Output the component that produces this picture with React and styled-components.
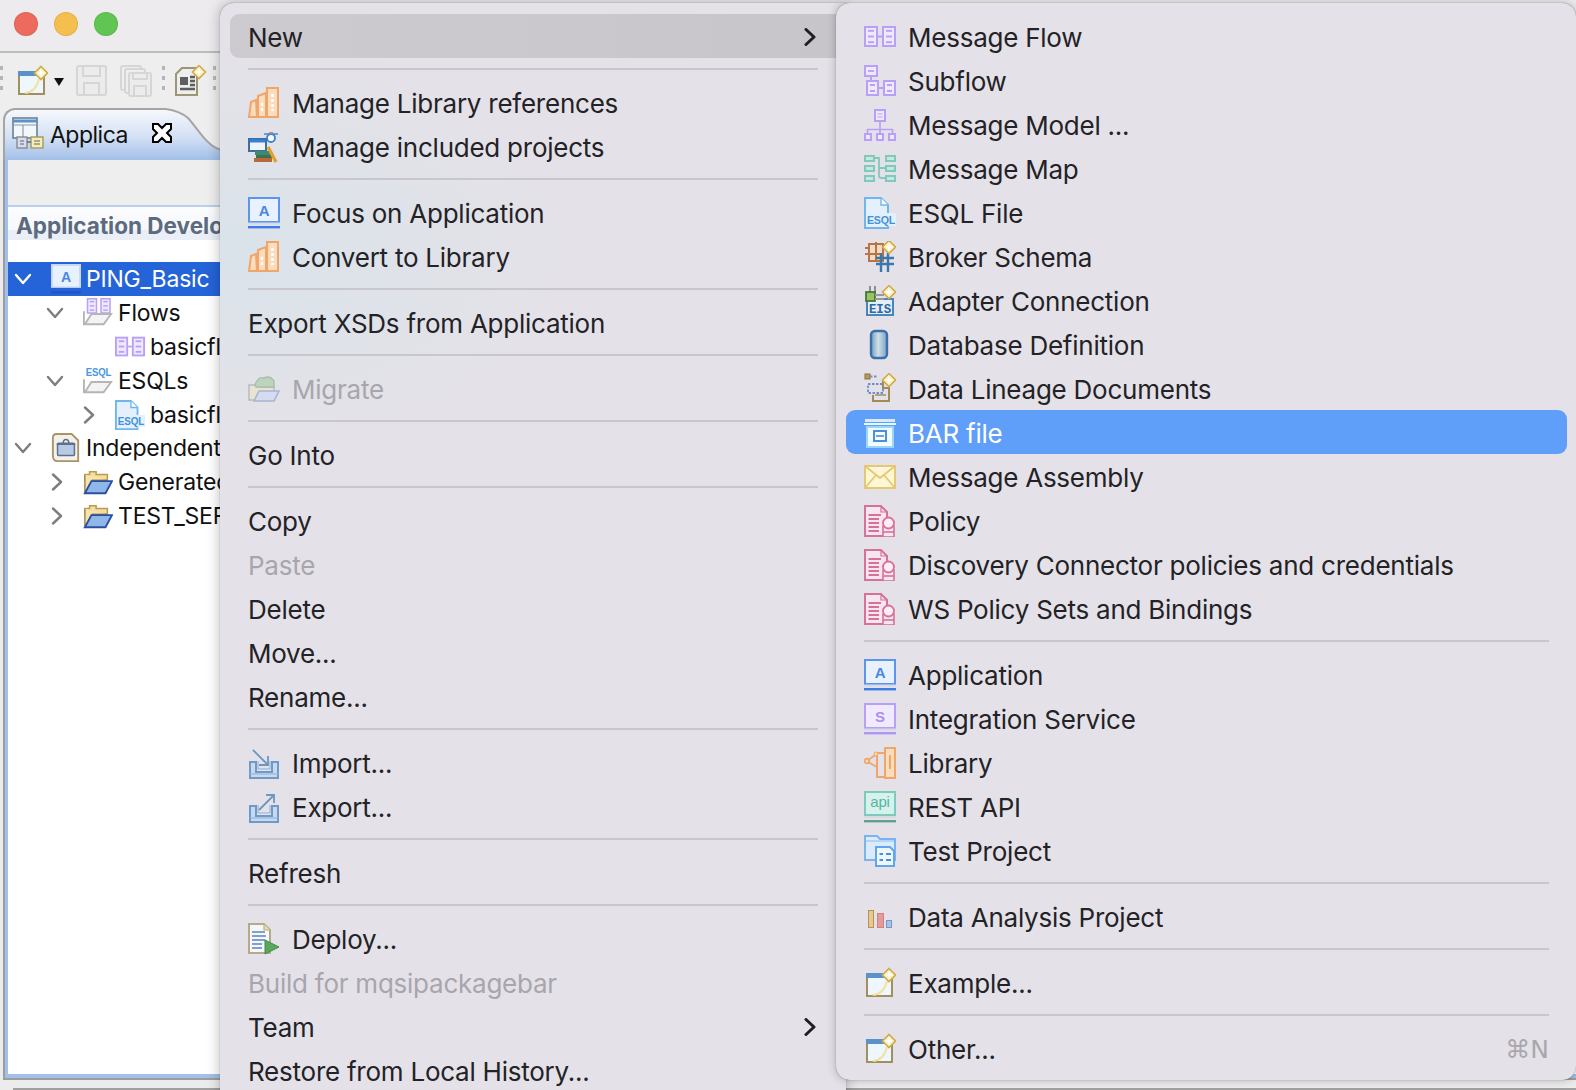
import React from 'react'
import styled, { createGlobalStyle } from 'styled-components'

const GlobalStyle = createGlobalStyle`
  html, body {
    margin: 0;
    padding: 0;
    background: #ececec;
  }
  body {
    font-family: Inter, 'Noto Sans', 'Liberation Sans', sans-serif;
    overflow: hidden;
  }
`

const Screen = styled.div`
  position: relative;
  width: 1576px;
  height: 1090px;
  overflow: hidden;
  background: #ececec;
`

const Window = styled.div`
  display: flex;
  flex-direction: column;
  height: 100%;
`

const TitleBar = styled.div`
  display: flex;
  align-items: center;
  gap: 16px;
  box-sizing: border-box;
  height: 53px;
  padding: 0 0 3px 14px;
  background: #edebee;
  border-bottom: 2px solid #bdbcbd;
`

const Light = styled.span`
  width: 24px;
  height: 24px;
  border-radius: 50%;
  background: ${p => p.$color};
  box-shadow: inset 0 0 0 1px rgba(0, 0, 0, 0.08);
`

const Toolbar = styled.div`
  display: flex;
  align-items: center;
  height: 55px;
  background: #eeeeee;
`

const Grip = styled.span`
  width: 3px;
  height: 30px;
  margin: 0 ${p => p.$right || 0}px 0 ${p => p.$left || 0}px;
  background: repeating-linear-gradient(to bottom, #b5b5b5 0 4px, transparent 4px 10px);
`

const ToolIcon = styled.span`
  display: flex;
  margin-right: ${p => p.$gap || 0}px;
`

const Caret = styled.span`
  width: 0;
  height: 0;
  margin: 3px 12px 0 0;
  border-left: 5px solid transparent;
  border-right: 5px solid transparent;
  border-top: 8px solid #111;
`

const TabStrip = styled.div`
  display: flex;
  height: 52px;
  padding-left: 3px;
  background: #eeeeee;
`

const Tab = styled.div`
  display: flex;
  align-items: center;
  flex: none;
  box-sizing: border-box;
  width: 163px;
  padding: 0 0 4px 7px;
  border-top: 2px solid #a5a5a5;
  border-left: 2px solid #a5a5a5;
  border-top-left-radius: 12px;
  background: linear-gradient(to bottom, #f6f8fd 0%, #d3e0f4 55%, #a2bfe8 100%);
  font-size: 23px;
  letter-spacing: -0.5px;
  color: #111;
`

const TabIconBox = styled.span`
  display: flex;
  flex: none;
`

const TabLabel = styled.span`
  flex: none;
  width: 101px;
  margin-left: 6px;
  padding-top: 3px;
`

const TabClose = styled.span`
  position: relative;
  display: flex;
  flex: none;
  margin-right: -14px;
`

const TabCurve = styled.svg`
  display: block;
  flex: none;
`

const Panel = styled.div`
  flex: 1;
  display: flex;
  flex-direction: column;
  min-height: 0;
  margin-left: 3px;
  border-left: 2px solid #9d9d9d;
  border-bottom: 2px solid #9d9d9d;
`

const PanelInner = styled.div`
  flex: 1;
  display: flex;
  flex-direction: column;
  min-height: 0;
  border-left: 3px solid #a3c0ea;
  border-bottom: 4px solid #a3c0ea;
  background: #ffffff;
`

const PanelGap = styled.div`
  height: 45px;
  background: #eeeeee;
`

const SectionTitle = styled.div`
  box-sizing: border-box;
  height: 35px;
  padding: 5px 0 0 8px;
  border-top: 2px solid #b9cfee;
  background: linear-gradient(to bottom, #fbfcfe 0%, #f6f8fc 70%, #e9eef7 70%, #e9eef7 100%);
  font-size: 22.5px;
  font-weight: 700;
  color: #5c6a7e;
  white-space: nowrap;
`

const Tree = styled.div`
  padding-top: 22px;
  background: #ffffff;
`

const TreeRow = styled.div`
  display: flex;
  align-items: center;
  height: 33.9px;
  padding-left: ${p => p.$level * 32 + 6}px;
  background: ${p => (p.$selected ? '#2463d8' : 'transparent')};
  color: ${p => (p.$selected ? '#ffffff' : '#111111')};
  font-size: 23px;
  letter-spacing: -0.2px;
  white-space: nowrap;
`

const TreeToggle = styled.span`
  display: flex;
  justify-content: center;
  width: ${p => (p.$closed ? 22 : 18)}px;
  margin-right: ${p => (p.$closed ? 15 : 19)}px;
`

const TreeIcon = styled.span`
  display: flex;
  margin: 0 5px 0 0;
`

const StatusLine = styled.div`
  flex: none;
  height: 2px;
  margin: 8px 0 0 13px;
  background: #a0a0a0;
`

const MainMenu = styled.div`
  position: absolute;
  left: 220px;
  top: 3px;
  box-sizing: border-box;
  width: 626px;
  height: 1100px;
  padding: 11px 11px 0 10px;
  border-radius: 14px 0 0 0;
  background:
    radial-gradient(ellipse 340px 190px at 10px 250px, #dae3ea 0%, rgba(218, 227, 234, 0) 100%),
    #e4e2e8;
  box-shadow: 0 0 14px rgba(0, 0, 0, 0.28), 0 0 1px rgba(0, 0, 0, 0.5);
`

const SubMenu = styled.div`
  position: absolute;
  left: 836px;
  top: 3px;
  box-sizing: border-box;
  width: 740px;
  height: 1077px;
  padding: 11px 9px 0 10px;
  border-radius: 14px;
  background: #e4e2e8;
  box-shadow: 0 0 10px rgba(0, 0, 0, 0.25), 0 0 1px rgba(0, 0, 0, 0.5);
`

const Row = styled.div`
  display: flex;
  align-items: center;
  box-sizing: border-box;
  height: 44px;
  padding: 2px ${p => (p.$open ? 26 : 16)}px 0 18px;
  border-radius: 9px;
  font-size: 26px;
  letter-spacing: -0.24px;
  white-space: nowrap;
  color: ${p => (p.$active ? '#ffffff' : p.$disabled ? '#a8a6ac' : '#232226')};
  background: ${p => (p.$active ? '#5f9ef9' : p.$open ? 'linear-gradient(to right, #cdcbd0, #c8c5ca)' : 'transparent')};
  margin-right: ${p => (p.$open ? -10 : 0)}px;
`

const SubRow = styled(Row)`
  padding-right: 18px;
`

const RowIcon = styled.span`
  display: flex;
  flex: none;
  width: 32px;
  margin-right: 12px;
`

const RowLabel = styled.span`
  flex: 1;
`

const Shortcut = styled.span`
  font-family: 'DejaVu Sans', sans-serif;
  font-size: 25px;
  letter-spacing: 0;
  color: #a9a7ad;
`

const Separator = styled.div`
  height: 2px;
  margin: 10px ${p => p.$right}px 10px 18px;
  background: #c9c7cc;
`

const Svg = ({ size = 32, children }) => (
  <svg width={size} height={size} viewBox="0 0 32 32" fill="none">{children}</svg>
)

const Chevron = ({ dir = 'right', color = '#222', w = 3, size = 18 }) => (
  <svg width={size} height={size} viewBox="0 0 18 18" fill="none">
    <path
      d={dir === 'right' ? 'M5 1.5 L13 9 L5 16.5' : 'M2 5 L9 13 L16 5'}
      stroke={color}
      strokeWidth={w}
      strokeLinecap="round"
      strokeLinejoin="round"
    />
  </svg>
)

const PURPLE = '#b9a0f6'
const PURPLE_FILL = '#efe9ff'

const FlowBox = ({ x, y, w, h, lines = 3 }) => (
  <g>
    <rect x={x + 1} y={y + 1} width={w - 2} height={h - 2} fill={PURPLE_FILL} stroke={PURPLE} strokeWidth="2" />
    {Array.from({ length: lines }).map((_, i) => (
      <path
        key={i}
        d={`M${x + 4} ${y + 2 + (h - 4) * (i + 0.5) / lines} H${x + w - 4}`}
        stroke={PURPLE}
        strokeWidth="2"
      />
    ))}
  </g>
)

const MessageFlowIcon = ({ size }) => (
  <Svg size={size}>
    <FlowBox x={0} y={5} w={14} h={21} />
    <FlowBox x={18} y={5} w={14} h={21} />
    <path d="M14 15.5 H18" stroke={PURPLE} strokeWidth="2" />
  </Svg>
)

const SubflowIcon = () => (
  <Svg>
    <rect x="1" y="1" width="12" height="10" fill={PURPLE_FILL} stroke={PURPLE} strokeWidth="2" />
    <path d="M4 6 H10" stroke={PURPLE} strokeWidth="1.8" />
    <path d="M7 11 V15" stroke={PURPLE} strokeWidth="2" />
    <FlowBox x={2} y={15} w={13} h={16} lines={2} />
    <FlowBox x={19} y={15} w={13} h={16} lines={2} />
    <path d="M15 23 H19" stroke={PURPLE} strokeWidth="2" />
  </Svg>
)

const ModelIcon = () => (
  <Svg>
    <rect x="11" y="1" width="10" height="11" fill={PURPLE_FILL} stroke={PURPLE} strokeWidth="2" />
    <path d="M13.5 5 H18.5 M13.5 8 H18.5" stroke={PURPLE} strokeWidth="1.2" />
    <path d="M16 12 V25 M3.5 25 V20.5 H28.5 V25" stroke={PURPLE} strokeWidth="1.6" />
    <rect x="1" y="25" width="6" height="6" fill={PURPLE_FILL} stroke={PURPLE} strokeWidth="2" />
    <rect x="13" y="25" width="6" height="6" fill={PURPLE_FILL} stroke={PURPLE} strokeWidth="2" />
    <rect x="25" y="25" width="6" height="6" fill={PURPLE_FILL} stroke={PURPLE} strokeWidth="2" />
  </Svg>
)

const MapIcon = () => {
  const c = '#7fcabc'
  const ys = [3, 13, 23]
  return (
    <Svg>
      {ys.map(y => (
        <g key={y}>
          <rect x="1" y={y} width="9" height="5" fill="#c9e6e0" stroke={c} strokeWidth="2" />
          <rect x="22" y={y} width="9" height="5" fill="#c9e6e0" stroke={c} strokeWidth="2" />
        </g>
      ))}
      <path d="M10 5 H15 V23 Q15 25 18 25 H22 M15 15 H22" stroke={c} strokeWidth="1.8" />
    </Svg>
  )
}

const EsqlIcon = ({ size }) => (
  <Svg size={size}>
    <path d="M1 1 H17 L24 8 V31 H1 Z" fill="#e4f1fd" stroke="#6fb6ec" strokeWidth="2" />
    <path d="M17 1 V8 H24" fill="#ffffff" stroke="#6fb6ec" strokeWidth="1.4" />
    <rect x="3" y="16" width="29" height="13" fill="#e4f1fd" />
    <text x="3" y="27" fontFamily="'Liberation Sans', sans-serif" fontSize="11" fontWeight="700" fill="#3f93d8" textLength="28" lengthAdjust="spacingAndGlyphs">ESQL</text>
  </Svg>
)

const Star = ({ x = 25, y = 7 }) => (
  <g>
    <path d={`M${x} ${y - 6.5} L${x + 6.5} ${y} L${x} ${y + 6.5} L${x - 6.5} ${y} Z`} fill="#fbf2c4" stroke="#d0ab4e" strokeWidth="1.6" />
    <path d={`M${x} ${y - 3} V${y + 3} M${x - 3} ${y} H${x + 3}`} stroke="#fff" strokeWidth="1.6" />
  </g>
)

const BrokerIcon = () => (
  <Svg>
    <path d="M5 3 H19 V20 H5 Z" fill="#f2dcc2" stroke="#b6744a" strokeWidth="2" />
    <path d="M1 13 H20 M12 1 V21 M1 7 H5" stroke="#b6744a" strokeWidth="2" />
    <path d="M12 23 H30 M12 17 H30 M17 12 V31 M24 12 V31" stroke="#3a78ab" strokeWidth="2.4" />
    <Star x={25} y={6} />
  </Svg>
)

const AdapterIcon = () => (
  <Svg>
    <path d="M3 14 H29 V30 H3 Z" fill="#e3eefa" stroke="#4a84b8" strokeWidth="2" />
    <text x="5" y="28" fontFamily="'Liberation Mono', monospace" fontSize="12.5" fontWeight="700" fill="#30689e" textLength="22">EIS</text>
    <path d="M6 1 V8 M11 1 V8" stroke="#8f8f8f" strokeWidth="2" />
    <rect x="2" y="7" width="9" height="9" fill="#9bc25d" stroke="#3f7a3e" strokeWidth="1.8" />
    <path d="M11 10 H20 M11 14 H20" stroke="#9a9a9a" strokeWidth="2" />
    <Star x={25} y={7} />
  </Svg>
)

const DatabaseIcon = () => (
  <Svg>
    <defs>
      <linearGradient id="dbFill" x1="0" x2="1" y1="0" y2="0">
        <stop offset="0" stopColor="#6f9cc0" />
        <stop offset="0.45" stopColor="#cfe0e8" />
        <stop offset="1" stopColor="#7aa3c4" />
      </linearGradient>
    </defs>
    <rect x="7" y="2" width="16" height="27" rx="4" fill="url(#dbFill)" stroke="#3c6ea8" strokeWidth="2.4" />
  </Svg>
)

const LineageIcon = () => (
  <Svg>
    <rect x="1" y="1" width="5" height="5" fill="#b69a5e" stroke="#8a7038" strokeWidth="1" />
    <path d="M6 3.5 H14 M4 11 H19 V20 H4 Z" stroke="#6e90c8" strokeWidth="1.8" strokeDasharray="2.5 1.5" />
    <path d="M19 8 V15 H25 V28 H9 V22" stroke="#a08c5a" strokeWidth="2" />
    <path d="M11 22 H22" stroke="#a08c5a" strokeWidth="1.4" />
    <Star x={25} y={7} />
  </Svg>
)

const BarIcon = () => (
  <Svg>
    <path d="M1 2 H31 V5 H1 Z" fill="#d4ecfb" />
    <path d="M0 6 H32 V8 H0 Z" fill="#eaf6fe" />
    <rect x="3" y="10" width="26" height="20" fill="#f4fbff" stroke="#9bd7f5" strokeWidth="2" />
    <rect x="10" y="14" width="12" height="10" fill="none" stroke="#4b8fd8" strokeWidth="2" />
    <path d="M12 19 H20" stroke="#4b8fd8" strokeWidth="1.6" />
  </Svg>
)

const EnvelopeIcon = () => (
  <Svg>
    <rect x="1" y="5" width="30" height="22" fill="#fdf7d6" stroke="#e4c873" strokeWidth="2" />
    <path d="M1 5 L16 17 L31 5 M1 27 L12 14 M31 27 L20 14" stroke="#e4c873" strokeWidth="1.8" />
  </Svg>
)

const PolicyIcon = () => {
  const c = '#d8709c'
  return (
    <Svg>
      <path d="M1 1 H17 L23 7 V31 H1 Z" fill="#f6e6ee" stroke={c} strokeWidth="2" />
      <path d="M17 1 V7 H23" stroke={c} strokeWidth="1.2" />
      <path d="M4.5 10 H17 M4.5 14 H15 M4.5 18 H15 M4.5 22 H15 M4.5 26 H15" stroke={c} strokeWidth="1.8" />
      <rect x="19" y="21" width="11" height="11" fill="#f6e6ee" stroke={c} strokeWidth="1.6" />
      <path d="M19 27 H30" stroke={c} strokeWidth="1.6" />
      <circle cx="24.5" cy="18" r="5.5" fill="#fbeff4" stroke={c} strokeWidth="1.8" />
    </Svg>
  )
}

const AppIcon = ({ size, letter = 'A', stroke = '#5c94ee', ink = '#4a86ea', fill = '#e8f1fe', shelf = '#3f7be6', rule = '#d6d9e6' }) => (
  <Svg size={size}>
    <rect x="1" y="1" width="30" height="24" fill={fill} stroke={stroke} strokeWidth="2" />
    <text x="16" y="19" textAnchor="middle" fontFamily="'Liberation Sans', sans-serif" fontSize="15" fontWeight="700" fill={ink}>{letter}</text>
    <rect x="0" y="25.5" width="32" height="2" fill={rule} />
    <rect x="0" y="29" width="32" height="2.4" fill={shelf} />
  </Svg>
)

const BooksIcon = () => {
  const c = '#f0a56a'
  const f = '#fbdcbd'
  return (
    <Svg>
      <path d="M3 15 L8 13 L9 30 H1 Z" fill={f} stroke={c} strokeWidth="2" />
      <path d="M10 9 L18 6 V30 H10 Z" fill={f} stroke={c} strokeWidth="2" />
      <rect x="19" y="1" width="11" height="29" fill={f} stroke={c} strokeWidth="2" />
      <path d="M24.5 7 V24 M14 16 V24" stroke="#fff" strokeWidth="2.4" strokeDasharray="3 2" />
    </Svg>
  )
}

const ProjectsIcon = () => (
  <Svg>
    <rect x="1" y="8" width="17" height="12" fill="#eef4fb" stroke="#3b6ea8" strokeWidth="2" />
    <path d="M2 10 H17" stroke="#3b80d0" strokeWidth="3" />
    <path d="M7 20 H23 V24 H7 Z" fill="#3c8a70" />
    <path d="M8 24 H25 V27 H8 Z" fill="#3f6f4e" />
    <path d="M6 27 H24 V31 H6 Z" fill="#b9683e" />
    <path d="M20 16 L28 31" stroke="#e0a030" strokeWidth="3.4" />
    <circle cx="23" cy="7" r="4" fill="#f7fbff" stroke="#3b80d0" strokeWidth="1.8" />
    <path d="M16 3 H30" stroke="#3b80d0" strokeWidth="1.4" />
    <path d="M21 2 H25" stroke="#b88a70" strokeWidth="2" />
  </Svg>
)

const MigrateIcon = () => (
  <Svg>
    <path d="M1 12 H10 L12 14 H26 V27 H1 Z" fill="#e9e3cf" stroke="#b8bcc8" strokeWidth="1.6" />
    <path d="M6 28 L11 18 H31 L26 28 Z" fill="#d5dcef" stroke="#aab4d2" strokeWidth="1.6" />
    <path d="M7 12 Q10 3 16 5 Q22 2 26 8 V14 H8 Z" fill="#bcd4bd" stroke="#a7c0a8" strokeWidth="1.4" />
  </Svg>
)

const TrayIcon = ({ up }) => {
  const c = '#6f99c6'
  return (
    <Svg>
      <path d="M2 15 H8 V25 H24 V15 H30 V31 H2 Z" fill="#c6d9ee" stroke={c} strokeWidth="2" />
      <path d="M1 27 H31" stroke="#8db0d6" strokeWidth="1" />
      <path d="M10 14 V22 H22 V14" stroke="#8db0d6" strokeWidth="1" />
      {up ? (
        <path d="M11 19 L25 5 M18 4 H26 V12" stroke="#6a98bf" strokeWidth="1.8" />
      ) : (
        <path d="M5 3 L19 17 M20 9 V18 H11" stroke="#6a98bf" strokeWidth="1.8" />
      )}
    </Svg>
  )
}

const DeployIcon = () => (
  <Svg>
    <path d="M1 1 H16 L22 7 V30 H1 Z" fill="#f5f7fb" stroke="#b5ab88" strokeWidth="2" />
    <path d="M16 1 V7 H22" fill="#e6dcae" stroke="#c2b279" strokeWidth="1.2" />
    <path d="M4 9 H17 M4 13 H18 M4 17 H17 M4 21 H14 M4 25 H14" stroke="#7ea1d0" strokeWidth="2" />
    <path d="M17 17 L31 24 L17 31 Z" fill="#58a95c" stroke="#3f8e49" strokeWidth="1" />
  </Svg>
)

const ServiceAppIcon = () => (
  <AppIcon letter="S" stroke="#b99ff5" ink="#ad8ff0" fill="#f0eafe" shelf="#b195f4" />
)

const LibraryIcon = () => {
  const c = '#f0a56a'
  return (
    <Svg>
      <rect x="21" y="1" width="10" height="30" fill="#fbdcbd" stroke={c} strokeWidth="2" />
      <path d="M13 6 H21 M13 6 V30 H21 M26 8 V22" stroke={c} strokeWidth="2" />
      <circle cx="3" cy="14" r="2.4" fill="#fbdcbd" stroke={c} strokeWidth="1.6" />
      <path d="M4 13 L13 7 M4 15 L13 20" stroke={c} strokeWidth="1.8" />
      <circle cx="12" cy="7" r="2" fill="#fbdcbd" stroke={c} />
    </Svg>
  )
}

const ApiIcon = () => (
  <Svg>
    <rect x="1" y="1" width="30" height="23" fill="#d5f2ec" stroke="#7fcabc" strokeWidth="2" />
    <text x="16" y="16" textAnchor="middle" fontFamily="'Liberation Sans', sans-serif" fontSize="15" fill="#57b5a5">api</text>
    <rect x="0" y="25" width="32" height="2" fill="#d6dedd" />
    <rect x="0" y="29" width="32" height="2.4" fill="#5f9f95" />
  </Svg>
)

const TestProjectIcon = () => (
  <Svg>
    <path d="M1 1 H13 L16 4 H31 V25 H1 Z" fill="#dcebfc" stroke="#7ab4ee" strokeWidth="2" />
    <path d="M2 6 H30" stroke="#a9cff4" strokeWidth="1.6" />
    <path d="M12 12 H26 L30 16 V31 H12 Z" fill="#eef6fe" stroke="#61a6e8" strokeWidth="2" />
    <path d="M15.5 19 H19 M22 19 H27 M15.5 25 H19 M22 25 H27" stroke="#4a8fd8" strokeWidth="2" />
  </Svg>
)

const AnalysisIcon = () => (
  <Svg>
    <rect x="4.5" y="9.5" width="5" height="17" fill="#e7c98c" stroke="#b98f56" />
    <rect x="13.5" y="12.5" width="6" height="14" fill="#e29a9a" stroke="#d08181" />
    <rect x="22.5" y="19.5" width="5" height="7" fill="#aac2e4" stroke="#7398c8" />
  </Svg>
)

const WizardIcon = ({ size }) => (
  <Svg size={size}>
    <rect x="3" y="7" width="25" height="22" fill="#eff7fe" stroke="#a08f5f" strokeWidth="2" />
    <path d="M2 6 H22 V11 H2 Z" fill="#5b93c8" />
    <path d="M9 28 Q20 27 23 14" stroke="#f1e2a0" strokeWidth="2" />
    <Star x={25} y={8} />
  </Svg>
)

const SaveIcon = ({ double }) => {
  const c = '#d6d6d6'
  return (
    <Svg>
      {double && <rect x="1" y="1" width="20" height="24" rx="2" stroke={c} strokeWidth="2" />}
      {double && <rect x="5" y="4" width="20" height="24" rx="2" stroke={c} strokeWidth="2" fill="#eee" />}
      <rect x={double ? 9 : 1} y={double ? 8 : 1} width={double ? 22 : 29} height={double ? 23 : 29} rx="2" fill="#ececec" stroke={c} strokeWidth="2" />
      <path d={double ? 'M13 8 V14 H27 V8 M14 31 V21 H26 V31' : 'M7 1 V11 H24 V1 M8 30 V18 H23 V30'} stroke={c} strokeWidth="2" />
    </Svg>
  )
}

const NewFileIcon = () => (
  <Svg>
    <path d="M1 9 L7 3 H22 V30 H1 Z" fill="#eeeeee" stroke="#9f9473" strokeWidth="2" />
    <path d="M5 12 H13 V20 H5 Z" fill="#5e5e5e" />
    <path d="M15 12 H20 M15 16 H20 M15 20 H20 M5 24 H20" stroke="#5e5e5e" strokeWidth="2.4" />
    <Star x={24} y={7} />
  </Svg>
)

const TabAppIcon = () => (
  <Svg>
    <rect x="1" y="1" width="24" height="20" fill="#f2f7fc" stroke="#6b7f8f" strokeWidth="1.6" />
    <path d="M1 4 H25" stroke="#5b93c8" strokeWidth="3" />
    <path d="M11 8 V21 M1 8 H25" stroke="#8b9aa7" strokeWidth="1.2" />
    <rect x="5" y="20" width="10" height="11" fill="#d7dcf0" stroke="#8a8a8a" strokeWidth="1.4" />
    <rect x="19" y="20" width="12" height="11" fill="#f3edb8" stroke="#a09a60" strokeWidth="1.4" />
    <path d="M15 25 H19" stroke="#5b6f9f" strokeWidth="1.6" />
    <path d="M8 24 H12 M8 27 H12 M22 24 H28 M22 27 H28" stroke="#666" strokeWidth="1.2" />
  </Svg>
)

const CloseIcon = () => (
  <svg width="22" height="22" viewBox="0 0 22 22">
    <path
      d="M2 2 H7 L11 6 L15 2 H20 V7 L16 11 L20 15 V20 H15 L11 16 L7 20 H2 V15 L6 11 L2 7 Z"
      fill="#ffffff"
      stroke="#000000"
      strokeWidth="2"
    />
  </svg>
)

const EmptyFolderIcon = ({ children }) => (
  <Svg size={30}>
    {children}
    <path d="M1 14 V28 H22 L30 17 H9 L2 28" fill="#f3f3f3" stroke="#b5b5b5" strokeWidth="2" />
  </Svg>
)

const OpenFolderIcon = () => (
  <Svg size={30}>
    <path d="M2 8 H7 V5 H14 V8 H26 V14 H2 Z" fill="#f6dd9e" stroke="#b99b56" strokeWidth="1.6" />
    <path d="M2 8 V26 H8 L10 14 H26" fill="#f6e3ae" stroke="#a88a48" strokeWidth="1.6" />
    <path d="M2 28 L9 15 H31 L24 28 Z" fill="#8fb8ea" stroke="#2c4fa0" strokeWidth="2" />
  </Svg>
)

const ResourcesIcon = () => (
  <Svg size={30}>
    <path d="M6 1 H22 L29 8 V30 H7 Q2 30 2 24 V5 Q2 1 6 1 Z" fill="#f3f1ea" stroke="#a89468" strokeWidth="2" />
    <rect x="7" y="11" width="18" height="13" rx="1" fill="#b8cbe4" stroke="#5f6f8f" strokeWidth="1.6" />
    <path d="M6 12 H26 M13 11 Q13 7 16 7 Q19 7 19 11" stroke="#5f6f8f" strokeWidth="1.6" />
  </Svg>
)

const mainItems = [
  { label: 'New', open: true, arrow: true },
  'sep',
  { label: 'Manage Library references', icon: <BooksIcon /> },
  { label: 'Manage included projects', icon: <ProjectsIcon /> },
  'sep',
  { label: 'Focus on Application', icon: <AppIcon /> },
  { label: 'Convert to Library', icon: <BooksIcon /> },
  'sep',
  { label: 'Export XSDs from Application' },
  'sep',
  { label: 'Migrate', icon: <MigrateIcon />, disabled: true },
  'sep',
  { label: 'Go Into' },
  'sep',
  { label: 'Copy' },
  { label: 'Paste', disabled: true },
  { label: 'Delete' },
  { label: 'Move...' },
  { label: 'Rename...' },
  'sep',
  { label: 'Import...', icon: <TrayIcon /> },
  { label: 'Export...', icon: <TrayIcon up /> },
  'sep',
  { label: 'Refresh' },
  'sep',
  { label: 'Deploy...', icon: <DeployIcon /> },
  { label: 'Build for mqsipackagebar', disabled: true },
  { label: 'Team', arrow: true },
  { label: 'Restore from Local History...' },
]

const subItems = [
  { label: 'Message Flow', icon: <MessageFlowIcon /> },
  { label: 'Subflow', icon: <SubflowIcon /> },
  { label: 'Message Model ...', icon: <ModelIcon /> },
  { label: 'Message Map', icon: <MapIcon /> },
  { label: 'ESQL File', icon: <EsqlIcon /> },
  { label: 'Broker Schema', icon: <BrokerIcon /> },
  { label: 'Adapter Connection', icon: <AdapterIcon /> },
  { label: 'Database Definition', icon: <DatabaseIcon /> },
  { label: 'Data Lineage Documents', icon: <LineageIcon /> },
  { label: 'BAR file', icon: <BarIcon />, active: true },
  { label: 'Message Assembly', icon: <EnvelopeIcon /> },
  { label: 'Policy', icon: <PolicyIcon /> },
  { label: 'Discovery Connector policies and credentials', icon: <PolicyIcon /> },
  { label: 'WS Policy Sets and Bindings', icon: <PolicyIcon /> },
  'sep',
  { label: 'Application', icon: <AppIcon /> },
  { label: 'Integration Service', icon: <ServiceAppIcon /> },
  { label: 'Library', icon: <LibraryIcon /> },
  { label: 'REST API', icon: <ApiIcon /> },
  { label: 'Test Project', icon: <TestProjectIcon /> },
  'sep',
  { label: 'Data Analysis Project', icon: <AnalysisIcon /> },
  'sep',
  { label: 'Example...', icon: <WizardIcon /> },
  'sep',
  { label: 'Other...', icon: <WizardIcon />, shortcut: '⌘N' },
]

const treeRows = [
  { level: 0, open: true, selected: true, icon: <AppIcon size={30} stroke="#c4d8fa" rule="#2463d8" shelf="#1f55c4" />, label: 'PING_Basic' },
  { level: 1, open: true, icon: <EmptyFolderIcon><g transform="translate(4 -4) scale(0.8)"><FlowBox x={0} y={5} w={14} h={21} /><FlowBox x={18} y={5} w={14} h={21} /></g></EmptyFolderIcon>, label: 'Flows' },
  { level: 2, icon: <MessageFlowIcon size={30} />, label: 'basicfl' },
  { level: 1, open: true, icon: <EmptyFolderIcon><text x="3" y="11" fontFamily="'Liberation Sans', sans-serif" fontSize="11" fontWeight="700" fill="#4a98de" textLength="27" lengthAdjust="spacingAndGlyphs">ESQL</text></EmptyFolderIcon>, label: 'ESQLs' },
  { level: 2, closed: true, icon: <EsqlIcon size={30} />, label: 'basicfl' },
  { level: 0, open: true, icon: <ResourcesIcon />, label: 'Independent' },
  { level: 1, closed: true, icon: <OpenFolderIcon />, label: 'Generated' },
  { level: 1, closed: true, icon: <OpenFolderIcon />, label: 'TEST_SER' },
]

const MenuRows = ({ items, sepRight, as: RowPart = Row }) =>
  items.map((item, i) =>
    item === 'sep' ? (
      <Separator key={i} $right={sepRight} />
    ) : (
      <RowPart key={i} $open={item.open} $active={item.active} $disabled={item.disabled}>
        {item.icon && <RowIcon>{item.icon}</RowIcon>}
        <RowLabel>{item.label}</RowLabel>
        {item.arrow && <Chevron w={3} color="#1f1e22" />}
        {item.shortcut && <Shortcut>{item.shortcut}</Shortcut>}
      </RowPart>
    )
  )

export default function App() {
  return (
    <Screen>
      <GlobalStyle />
      <Window>
        <TitleBar>
          <Light $color="#ed6a5e" />
          <Light $color="#f5bf4f" />
          <Light $color="#61c554" />
        </TitleBar>
        <Toolbar>
          <Grip $right={13} />
          <ToolIcon $gap={6}><WizardIcon /></ToolIcon>
          <Caret />
          <ToolIcon $gap={12}><SaveIcon /></ToolIcon>
          <ToolIcon $gap={6}><SaveIcon double /></ToolIcon>
          <Grip $left={4} $right={10} />
          <ToolIcon $gap={6}><NewFileIcon /></ToolIcon>
          <Grip />
        </Toolbar>
        <TabStrip>
          <Tab>
            <TabIconBox><TabAppIcon /></TabIconBox>
            <TabLabel>Applica</TabLabel>
            <TabClose><CloseIcon /></TabClose>
          </Tab>
          <TabCurve width="56" height="52" viewBox="0 0 56 52">
            <defs>
              <linearGradient id="tabFill" x1="0" x2="0" y1="0" y2="1">
                <stop offset="0" stopColor="#f6f8fd" />
                <stop offset="0.55" stopColor="#d3e0f4" />
                <stop offset="1" stopColor="#a2bfe8" />
              </linearGradient>
            </defs>
            <path d="M0 1 C8 2 16 5 22 10 C30 19 36 29 42 34 C46 38 50 41 56 42 V52 H0 Z" fill="url(#tabFill)" />
            <path d="M0 1 C8 2 16 5 22 10 C30 19 36 29 42 34 C46 38 50 41 56 42" fill="none" stroke="#a5a5a5" strokeWidth="2" />
          </TabCurve>
        </TabStrip>
        <Panel>
          <PanelInner>
            <PanelGap />
            <SectionTitle>Application Develo</SectionTitle>
            <Tree>
              {treeRows.map((row, i) => (
                <TreeRow key={i} $level={row.level} $selected={row.selected}>
                  <TreeToggle $closed={row.closed}>
                    {row.open && <Chevron dir="down" w={2.4} color={row.selected ? '#ffffff' : '#7d7d7d'} />}
                    {row.closed && <Chevron w={2.4} color="#7d7d7d" />}
                  </TreeToggle>
                  <TreeIcon>{row.icon}</TreeIcon>
                  {row.label}
                </TreeRow>
              ))}
            </Tree>
          </PanelInner>
        </Panel>
        <StatusLine />
      </Window>
      <MainMenu>
        <MenuRows items={mainItems} sepRight={17} />
      </MainMenu>
      <SubMenu>
        <MenuRows items={subItems} sepRight={18} as={SubRow} />
      </SubMenu>
    </Screen>
  )
}
